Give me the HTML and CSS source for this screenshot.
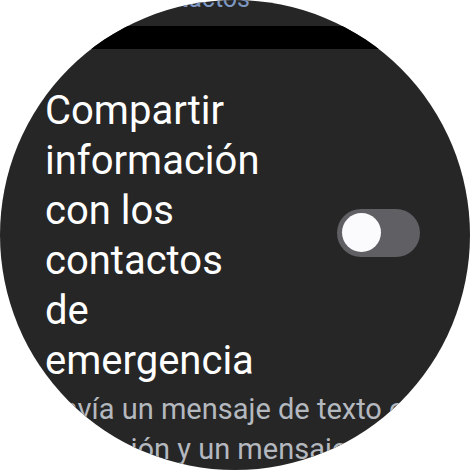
FILE: index.html
```html
<!DOCTYPE html>
<html lang="es">
<head>
<meta charset="utf-8">
<link rel="stylesheet" href="styles.css">
</head>
<body>
<div class="watch">
  <div class="prev">
    <span class="prev-link">Administrar contactos</span>
  </div>
  <div class="band"></div>
  <div class="content">
    <div class="row">
      <div class="title">Compartir<br>información<br>con los<br>contactos<br>de<br>emergencia</div>
      <div class="toggle"><div class="thumb"></div></div>
    </div>
    <p class="desc">Envía un mensaje de texto con tu ubicación y un mensaje de voz</p>
  </div>
</div>
</body>
</html>
```
FILE: styles.css
```css
html, body {
  margin: 0;
  padding: 0;
  background: #ffffff;
}
.watch {
  width: 470px;
  height: 470px;
  border-radius: 50%;
  overflow: hidden;
  background: #262626;
  font-family: Roboto, "Liberation Sans", sans-serif;
  display: flex;
  flex-direction: column;
}
.prev {
  height: 26px;
  flex: none;
  overflow: hidden;
  display: flex;
  justify-content: flex-end;
  padding-right: 220px;
}
.prev-link {
  font-size: 25px;
  line-height: 25px;
  margin-top: -14px;
  color: #7d97c2;
  white-space: nowrap;
}
.band {
  height: 23px;
  flex: none;
  background: #000000;
}
.content {
  padding: 37px 0 0 45px;
}
.row {
  display: flex;
  align-items: center;
}
.title {
  font-size: 40px;
  line-height: 50px;
  color: #ffffff;
  width: 292px;
  flex: none;
}
.toggle {
  width: 83px;
  height: 48px;
  border-radius: 24px;
  background: #5f5f64;
  flex: none;
  display: flex;
  align-items: center;
  padding-left: 5px;
  box-sizing: border-box;
  margin-bottom: 7px;
}
.thumb {
  width: 39px;
  height: 39px;
  border-radius: 50%;
  background: #fbfbfd;
}
.desc {
  margin: 0;
  padding-top: 3px;
  font-size: 29px;
  line-height: 40px;
  color: #b4b8bf;
}
```
